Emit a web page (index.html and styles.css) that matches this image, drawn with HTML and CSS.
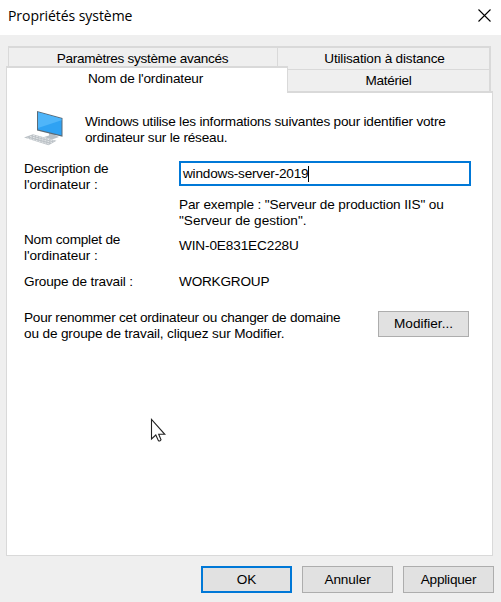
FILE: index.html
```html
<!DOCTYPE html>
<html lang="fr">
<head>
<meta charset="utf-8">
<title>Propriétés système</title>
<link rel="stylesheet" href="styles.css">
</head>
<body>
<div class="dialog">
  <header class="titlebar">
    <h1 class="title">Propriétés système</h1>
    <svg class="close" width="13" height="13" viewBox="0 0 13 13"><path d="M.5.5l12 12M12.5.5l-12 12" fill="none" stroke="#000" stroke-width="1.1"/></svg>
  </header>
  <nav class="tabs">
    <div class="tab-row back">
      <div class="tab advanced"><span class="t-adv">Paramètres système avancés</span></div>
      <div class="tab remote"><span class="t-remote">Utilisation à distance</span></div>
    </div>
    <div class="tab-row front">
      <div class="tab active"><span class="t-name">Nom de l'ordinateur</span></div>
      <div class="tab hardware"><span class="t-hard">Matériel</span></div>
    </div>
  </nav>
  <main class="panel">
    <section class="intro">
      <svg class="computer" width="40" height="36" viewBox="0 0 40 36">
        <path d="M25 22l6 1v2l4 2-7 2.500-8-2.500 5-1.500z" fill="#b9c0c6"/>
        <path d="M13 1l25.500 7v18.800L13 20.500z" fill="#5b6b77"/>
        <path d="M14 2.300l23.500 6.500v16.500L14 19.500z" fill="#2fa2f3"/>
        <path d="M14 2.300l23.500 6.500v1.500L14 18z" fill="#4fb5f9"/>
        <path d="M0 27.500l9-3.300 23.500 6.500-8 4.500z" fill="#bcc2c7"/>
        <path d="M3 28l22 6M6 26.500l22 6M9 25.300l21 5.700" stroke="#e4e7e9" stroke-dasharray="2 1" fill="none"/>
      </svg>
      <p><span class="i1">Windows utilise les informations suivantes pour identifier votre</span><br><span class="i2">ordinateur sur le réseau.</span></p>
    </section>
    <section class="fields">
      <label class="desc-label"><span class="d1">Description de</span><br><span class="d2">l'ordinateur :</span></label>
      <div class="desc">
        <div class="input"><span class="in">windows-server-2019</span><i class="caret"></i></div>
        <p><span class="e1">Par exemple : "Serveur de production IIS" ou</span><br><span class="e2">"Serveur de gestion".</span></p>
      </div>
      <div class="full-label"><span class="n1">Nom complet de</span><br><span class="d2">l'ordinateur :</span></div>
      <div class="full"><span class="win">WIN-0E831EC228U</span></div>
      <div class="group-label"><span class="g1">Groupe de travail :</span></div>
      <div class="group"><span class="wg">WORKGROUP</span></div>
    </section>
    <section class="rename">
      <p><span class="r1">Pour renommer cet ordinateur ou changer de domaine</span><br><span class="r2">ou de groupe de travail, cliquez sur Modifier.</span></p>
      <button class="modify"><span class="b0">Modifier...</span></button>
    </section>
  </main>
  <footer class="actions">
    <button class="primary"><span class="b1">OK</span></button>
    <button><span class="b2">Annuler</span></button>
    <button><span class="b3">Appliquer</span></button>
  </footer>
  <svg class="pointer" width="16" height="25" viewBox="0 0 16 25"><path d="M1.500 1.500v19.500l4.300-4 2.500 5.500q1.500 1.300 2.700-.8l-2.300-5.400H14.800z" fill="#fff" stroke="#222" stroke-width="1.100"/></svg>
</div>
</body>
</html>
```
FILE: styles.css
```css
* { box-sizing: border-box; }
body { margin: 0; }
p, h1 { margin: 0; font-weight: normal; }
.dialog {
  position: relative;
  width: 501px;
  height: 602px;
  display: flex;
  flex-direction: column;
  background: #efefef;
  color: #000;
  font: 13.6px/16px "Liberation Sans", Arial, sans-serif;
  white-space: nowrap;
  overflow: hidden;
}
.titlebar {
  height: 35px;
  flex: none;
  background: #fff;
  display: flex;
  justify-content: space-between;
  padding: 6px 10px 0 8px;
}
.title { font: 14px/20px "Open Sans", "Noto Sans", sans-serif; letter-spacing: -0.06px; }
.close { margin-top: 3px; }
.tabs { padding: 11px 10px 0 6px; height: 57px; flex: none; }
.tab-row { display: flex; }
.back {
  height: 20px;
  margin-left: 2px;
  border: solid #d9d9d9;
  border-width: 2px 2px 0 1px;
}
.tab { text-align: center; }
.advanced { width: 268px; padding: 3px 1px 0 0; }
.remote { flex: 1; border-left: 1px solid #d9d9d9; padding: 3px 0 0 2px; }
.front { height: 27px; position: relative; z-index: 1; }
.active {
  width: 282px;
  background: #fff;
  border: solid #d9d9d9;
  border-width: 2px 1px 0 1px;
  padding: 3px 3px 0 0;
}
.hardware {
  flex: 1;
  height: 25px;
  border-right: 2px solid #d9d9d9;
  background: linear-gradient(#d9d9d9, #d9d9d9) 0 3px / 100% 1px no-repeat;
  padding-top: 7px;
}
.panel {
  margin: -1px 8px 0 6px;
  height: 465px;
  flex: none;
  background: #fff;
  border: 1px solid #d9d9d9;
  border-top-width: 2px;
  padding: 17px 21px 0 17px;
}
.intro { display: flex; }
.computer { margin: 0 21px 0 0; }
.intro p { padding-top: 4px; height: 37px; }
.fields {
  display: grid;
  grid-template-columns: 155px 292px;
  grid-template-rows: 71px 42px 28px;
  margin-top: 14px;
}
.input {
  height: 25px;
  border: 2px solid #0078d7;
  display: flex;
  align-items: center;
  padding-left: 2px;
}
.caret { width: 1px; height: 16px; background: #000; }
.desc p { padding-top: 11px; }
.full { padding-top: 6px; }
.rename { display: flex; justify-content: space-between; margin-top: 8px; }
button {
  width: 91px;
  height: 26px;
  padding: 0;
  color: #000;
  font: inherit;
  background: #e1e1e1;
  border: 1px solid #adadad;
}
.modify { margin: 1px 2px 0 0; }
.actions { display: flex; gap: 10px; justify-content: flex-end; padding: 10px 7px 0 0; }
.actions button { height: 27px; }
.actions .primary { border: 2px solid #0078d7; }
.pointer { position: absolute; left: 150px; top: 418px; }

.t-adv { letter-spacing: -0.29px; }
.t-remote { letter-spacing: -0.2px; }
.t-name { letter-spacing: -0.16px; }
.t-hard { letter-spacing: -0.3px; }
.i1 { letter-spacing: -0.21px; }
.i2, .n1, .wg, .in, .b3 { letter-spacing: -0.2px; }
.d1 { letter-spacing: -0.17px; }
.d2 { letter-spacing: -0.05px; }
.e1, .win { letter-spacing: -0.13px; }
.g1 { letter-spacing: -0.15px; }
.r1 { letter-spacing: -0.23px; }
.r2 { letter-spacing: -0.14px; }
.b2 { letter-spacing: -0.1px; }
```
